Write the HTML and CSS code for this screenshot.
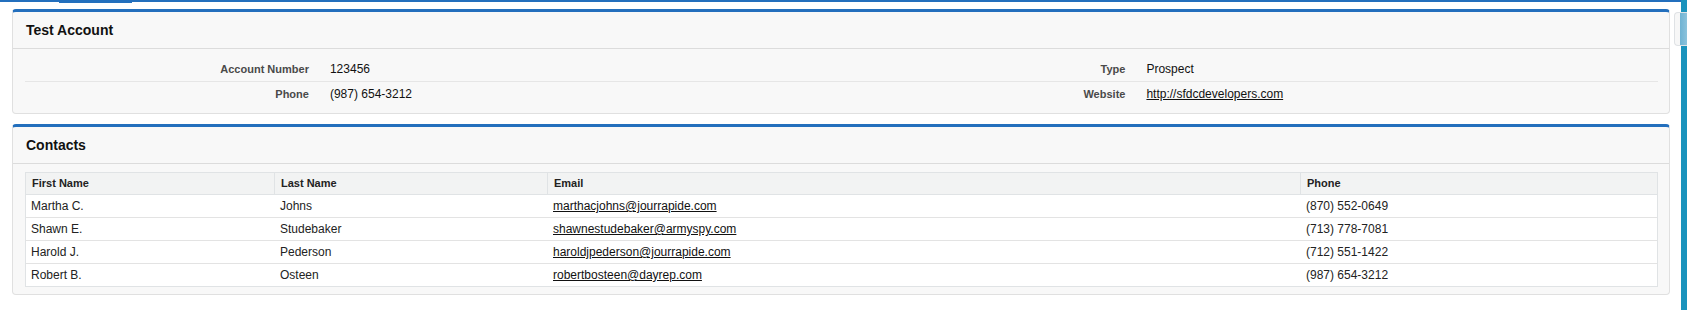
FILE: index.html
```html
<!DOCTYPE html>
<html lang="en">
<head>
    <meta charset="UTF-8">
    <title>Test Account</title>
    <link rel="stylesheet" href="styles.css">
</head>
<body>

<div class="page">
    <div class="main">
        <div class="topbar"><span class="topbar-tab"></span></div>

        <div class="panel">
            <div class="panel-header">Test Account</div>
            <div class="panel-body">
                <div class="detail-row">
                    <div class="detail-label">Account Number</div>
                    <div class="detail-value">123456</div>
                    <div class="detail-label">Type</div>
                    <div class="detail-value">Prospect</div>
                </div>
                <div class="detail-row last">
                    <div class="detail-label">Phone</div>
                    <div class="detail-value">(987) 654-3212</div>
                    <div class="detail-label">Website</div>
                    <div class="detail-value"><a href="#">http://sfdcdevelopers.com</a></div>
                </div>
            </div>
        </div>

        <div class="panel">
            <div class="panel-header">Contacts</div>
            <div class="panel-body">
                <table class="contacts">
                    <colgroup>
                        <col class="col-first">
                        <col class="col-last">
                        <col class="col-email">
                        <col class="col-phone">
                    </colgroup>
                    <thead>
                        <tr>
                            <th>First Name</th>
                            <th>Last Name</th>
                            <th>Email</th>
                            <th>Phone</th>
                        </tr>
                    </thead>
                    <tbody>
                        <tr>
                            <td>Martha C.</td>
                            <td>Johns</td>
                            <td><a href="#">marthacjohns@jourrapide.com</a></td>
                            <td>(870) 552-0649</td>
                        </tr>
                        <tr>
                            <td>Shawn E.</td>
                            <td>Studebaker</td>
                            <td><a href="#">shawnestudebaker@armyspy.com</a></td>
                            <td>(713) 778-7081</td>
                        </tr>
                        <tr>
                            <td>Harold J.</td>
                            <td>Pederson</td>
                            <td><a href="#">haroldjpederson@jourrapide.com</a></td>
                            <td>(712) 551-1422</td>
                        </tr>
                        <tr>
                            <td>Robert B.</td>
                            <td>Osteen</td>
                            <td><a href="#">robertbosteen@dayrep.com</a></td>
                            <td>(987) 654-3212</td>
                        </tr>
                    </tbody>
                </table>
            </div>
        </div>
    </div>

    <div class="side-strip"></div>
    <div class="side-tab"></div>
</div>

</body>
</html>
```

FILE: styles.css
```css
body {
    font-family: Arial, "Liberation Sans", sans-serif;
    background-color: #fff;
    color: #222;
    margin: 0;
}

.page {
    display: flex;
    min-height: 310px;
    position: relative;
}

.main {
    flex: 1;
}

.side-strip {
    width: 7px;
    background-color: #1a93bd;
}

.side-tab {
    position: absolute;
    right: 0;
    top: 12px;
    width: 12px;
    height: 32px;
    border: 1px solid #dfe2e5;
    border-right: none;
    border-radius: 4px 0 0 4px;
    background: linear-gradient(to right, #f7f7f7 0, #f7f7f7 5px, #6fb3d3 5px, #8cc3dc 100%);
}

.topbar {
    height: 2px;
    background-color: #236fbd;
    position: relative;
    margin-bottom: 7px;
}

.topbar-tab {
    position: absolute;
    left: 59px;
    top: 0;
    width: 73px;
    height: 3px;
    background-color: #236fbd;
}

.panel {
    margin: 0 11px 10px 12px;
    background-color: #f8f8f8;
    border: 1px solid #e0e0e0;
    border-top: 3px solid #236fbd;
    border-radius: 4px;
}

.panel-header {
    height: 36px;
    line-height: 36px;
    padding: 0 13px;
    font-size: 14px;
    font-weight: bold;
    color: #111;
    border-bottom: 1px solid #dcdcdc;
}

.panel-body {
    padding: 8px 11px 7px 12px;
}

.detail-row {
    display: grid;
    grid-template-columns: 18% 32% 18% 32%;
    height: 24px;
    align-items: center;
    border-bottom: 1px solid #e6e6e6;
}

.detail-row.last {
    border-bottom: none;
}

.detail-label {
    text-align: right;
    padding-right: 10px;
    font-size: 11px;
    font-weight: bold;
    color: #4a4a4a;
}

.detail-value {
    padding-left: 11px;
    font-size: 12px;
    color: #111;
}

a {
    color: #111;
    text-decoration: underline;
}

.contacts {
    width: 100%;
    table-layout: fixed;
    border-collapse: separate;
    border-spacing: 0;
    background-color: #fff;
    border: 1px solid #e0e3e5;
}

.col-first { width: 249px; }
.col-last { width: 273px; }
.col-email { width: 753px; }
.col-phone { width: 356px; }

.contacts th {
    background-color: #f2f3f3;
    font-size: 11px;
    font-weight: bold;
    color: #222;
    text-align: left;
    line-height: 21px;
    padding: 0 6px;
    border-right: 1px solid #e0e3e5;
    border-bottom: 1px solid #e0e3e5;
}

.contacts th:last-child {
    border-right: none;
}

.contacts td {
    font-size: 12px;
    color: #222;
    line-height: 22px;
    padding: 0 5px;
    border-bottom: 1px solid #e3e3e3;
}

.contacts tr:last-child td {
    border-bottom: none;
}
```
